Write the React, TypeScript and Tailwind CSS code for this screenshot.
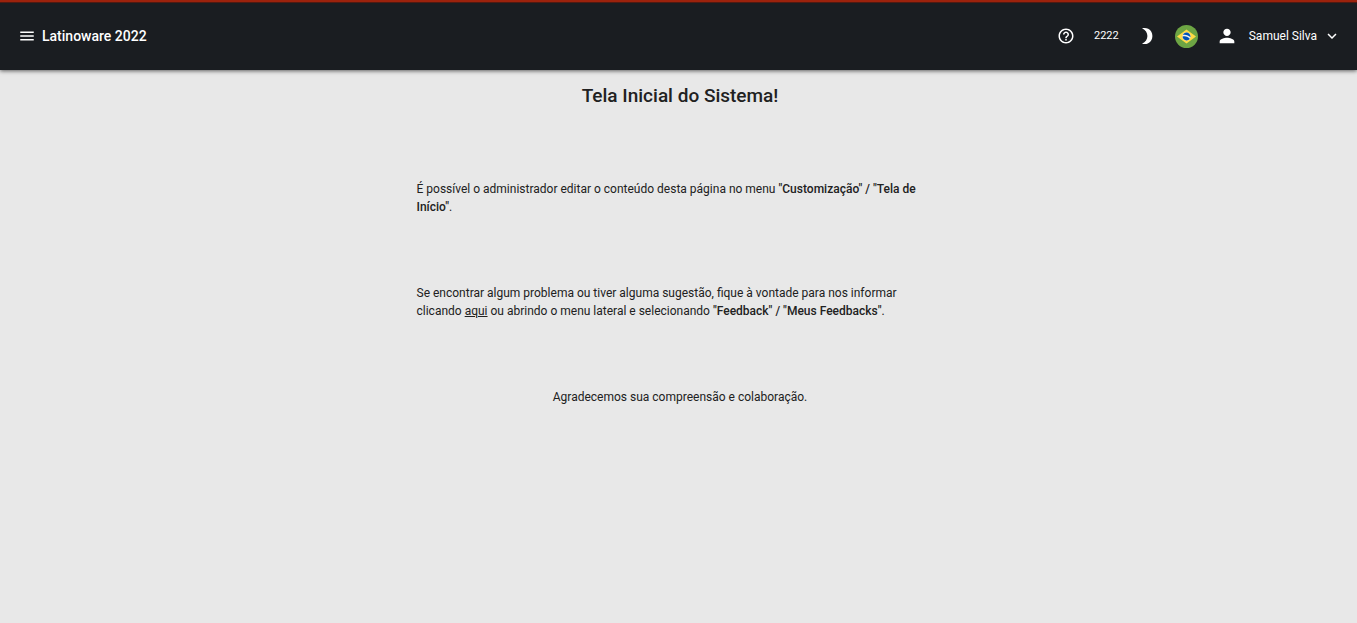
import { MdHelpOutline, MdMenu, MdPerson, MdExpandMore } from "react-icons/md";

function BrazilFlag() {
  return (
    <svg viewBox="0 0 512 512" className="size-[23px]" aria-hidden="true">
      <circle cx="256" cy="256" r="256" fill="#6da544" />
      <path fill="#ffda44" d="M256 100l212 156-212 156L44 256z" />
      <circle cx="256" cy="256" r="89" fill="#f0f0f0" />
      <path
        fill="#0052b4"
        d="M212 251c-15 0-30 2-44 7 1 48 40 87 88 87 30 0 57-15 73-38-28-34-70-56-117-56zM343 274c2-6 2-12 2-18 0-49-40-89-89-89-37 0-69 23-82 55 12-3 25-4 38-4 51 0 98 21 131 56z"
      />
    </svg>
  );
}

function Moon() {
  return (
    <svg viewBox="0 0 16 18" className="h-[18px] w-4" fill="currentColor" aria-hidden="true">
      <path d="M3 1.3C5 .7 7.4 .8 9.2 1.8C12 3.2 13.4 6 13.4 9S12 14.8 9.2 16.2C7.4 17.2 5 17.3 3 16.7C6.6 15 8.4 12.2 8.4 9S6.6 3 3 1.3z" />
    </svg>
  );
}

export default function App() {
  return (
    <div className="min-h-screen bg-[#e8e8e8] font-[Roboto,sans-serif] text-xs text-[#212121]">
      <header className="border-t-2 border-[#9c220c] bg-[#1a1d21] text-white shadow-[0_1px_4px_rgba(0,0,0,0.6)]">
        <div className="flex h-[68px] items-center justify-between border-t border-[#4f1a12] pr-4 pb-px pl-[18px]">
          <div className="flex items-center gap-1.5">
            <button aria-label="Menu">
              <MdMenu size={18} />
            </button>
            <span className="text-sm font-medium">Latinoware 2022</span>
          </div>
          <div className="flex items-center">
            <button aria-label="Ajuda" className="mr-[19px]">
              <MdHelpOutline size={18} />
            </button>
            <span className="mr-5 text-[11px] leading-[18px]">2222</span>
            <button aria-label="Modo escuro" className="mr-5">
              <Moon />
            </button>
            <button aria-label="Idioma" className="mr-[18px]">
              <BrazilFlag />
            </button>
            <button className="flex items-center leading-[18px]">
              <MdPerson size={22} className="mr-[11px]" />
              <span className="mr-1.5">Samuel Silva</span>
              <MdExpandMore size={18} />
            </button>
          </div>
        </div>
      </header>
      <main className="mx-auto max-w-[530px] pt-3 pl-[3px] leading-[18px]">
        <h1 className="text-center text-[19px] leading-7 font-medium">Tela Inicial do Sistema!</h1>
        <p className="mt-[70px]">
          É possível o administrador editar o conteúdo desta página no menu{" "}
          <strong className="font-medium">"Customização" / "Tela de Início"</strong>.
        </p>
        <p className="mt-[68px]">
          Se encontrar algum problema ou tiver alguma sugestão, fique à vontade para nos informar clicando{" "}
          <a href="#feedback" className="underline">aqui</a> ou abrindo o menu lateral e selecionando{" "}
          <strong className="font-medium">"Feedback" / "Meus Feedbacks"</strong>.
        </p>
        <p className="mt-[68px] text-center">Agradecemos sua compreensão e colaboração.</p>
      </main>
    </div>
  );
}
